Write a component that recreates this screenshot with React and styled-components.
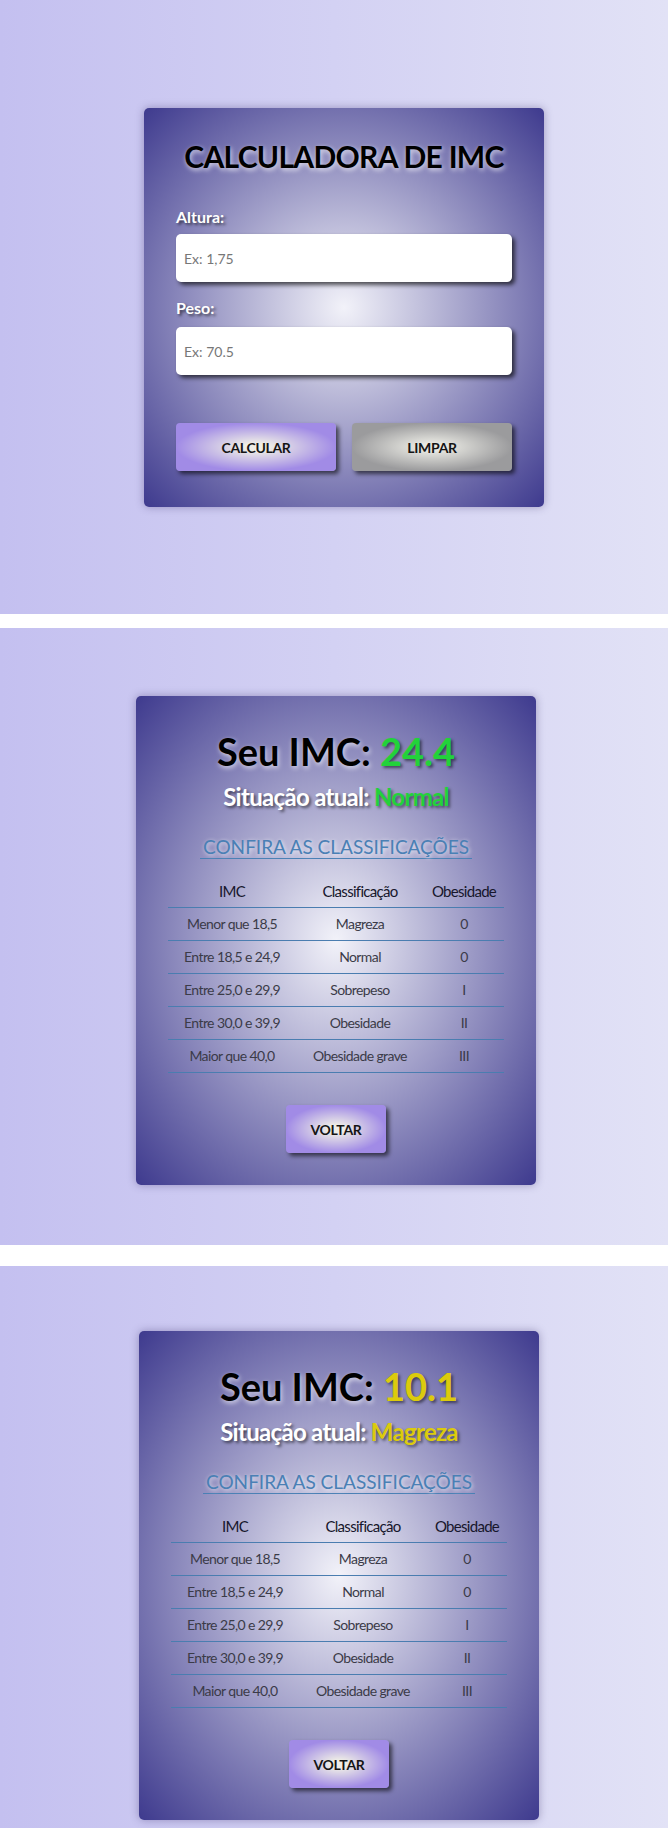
import React from "react";
import styled, { createGlobalStyle } from "styled-components";

const GlobalStyle = createGlobalStyle`
  html, body { margin: 0; padding: 0; background: #ffffff; }
  body { font-family: Lato, "Noto Sans", "Liberation Sans", sans-serif; }
  *, *::before, *::after { box-sizing: border-box; }
`;

const Screen = styled.section`
  height: ${(p) => p.$height}px;
  margin-top: ${(p) => p.$gap || 0}px;
  padding-top: ${(p) => p.$top}px;
  padding-left: ${(p) => p.$shift}px;
  display: flex;
  justify-content: center;
  align-items: flex-start;
  overflow: hidden;
  background: linear-gradient(to right, #c4c0f0, #e2e2f6);
`;

const Card = styled.div`
  width: 400px;
  padding: ${(p) => p.$pad};
  border-radius: 5px;
  background: radial-gradient(ellipse at center, #f2f2f9 0%, #3e3a8e 100%);
  box-shadow: 0 0 8px rgba(40, 30, 90, 0.35);
  display: flex;
  flex-direction: column;
`;

const AppTitle = styled.h1`
  margin: 0;
  font-size: 30px;
  font-weight: 700;
  line-height: 36px;
  letter-spacing: -0.7px;
  text-align: center;
  color: #000;
  text-shadow: 1px 2px 5px rgba(255, 255, 255, 0.75);
`;

const FieldLabel = styled.label`
  display: block;
  margin-top: ${(p) => p.$space}px;
  font-size: 16px;
  line-height: 19px;
  font-weight: 700;
  color: #fff;
  text-shadow: 2px 2px 3px rgba(0, 0, 0, 0.6);
`;

const TextInput = styled.input`
  display: block;
  width: 100%;
  height: 48px;
  margin-top: ${(p) => p.$space}px;
  padding: 0 8px;
  border: none;
  outline: none;
  border-radius: 5px;
  background: #fff;
  font-family: inherit;
  font-size: 14px;
  color: #222;
  box-shadow: 3px 3px 4px rgba(0, 0, 0, 0.65);
  &::placeholder {
    color: #777;
  }
`;

const ButtonRow = styled.div`
  display: grid;
  grid-template-columns: 1fr 1fr;
  gap: 16px;
  margin-top: 48px;
`;

const gradients = {
  primary: "radial-gradient(ellipse closest-side, #efeee6 15%, #a18be6 100%)",
  neutral: "radial-gradient(ellipse closest-side, #e9e9e3 15%, #9b9b9d 100%)",
};

const ActionButton = styled.button`
  height: 48px;
  width: ${(p) => (p.$width ? `${p.$width}px` : "100%")};
  align-self: ${(p) => (p.$width ? "center" : "stretch")};
  margin-top: ${(p) => p.$space || 0}px;
  border: none;
  border-radius: 4px;
  background: ${(p) => gradients[p.$variant]};
  font-family: inherit;
  font-size: 14px;
  font-weight: 700;
  letter-spacing: -0.3px;
  color: #151515;
  text-transform: uppercase;
  box-shadow: 3px 3px 4px rgba(0, 0, 0, 0.6);
  cursor: pointer;
`;

const ResultTitle = styled.h1`
  margin: 0;
  font-size: 38px;
  font-weight: 700;
  line-height: 46px;
  text-align: center;
  color: #000;
  text-shadow: 1px 2px 5px rgba(255, 255, 255, 0.7);
`;

const Highlight = styled.span`
  color: ${(p) => p.$color};
  text-shadow: 2px 2px 3px rgba(0, 0, 0, 0.5);
`;

const Status = styled.h2`
  margin: 8px 0 0;
  font-size: 24px;
  font-weight: 700;
  line-height: 29px;
  letter-spacing: -0.7px;
  text-align: center;
  color: #fff;
  text-shadow: 2px 2px 3px rgba(0, 0, 0, 0.55);
`;

const SectionHeading = styled.p`
  margin: 25px 0 0;
  text-align: center;
  line-height: 22px;
`;

const HeadingLink = styled.span`
  display: inline-block;
  padding: 0 3px;
  font-size: 19px;
  font-weight: 400;
  color: #4a80b5;
  border-bottom: 1px solid #4a80b5;
  text-shadow: 1px 1px 4px rgba(255, 255, 255, 0.8);
`;

const Table = styled.table`
  width: 100%;
  margin-top: 15px;
  border-collapse: collapse;
  table-layout: fixed;
`;

const HeadCell = styled.th`
  width: ${(p) => p.$w}px;
  padding: 8px 0 7px;
  font-size: 15px;
  font-weight: 400;
  line-height: 18px;
  letter-spacing: -0.7px;
  color: #17172c;
  text-align: center;
  border-bottom: 1px solid #4a7db0;
`;

const Cell = styled.td`
  padding: 8px 0;
  font-size: 14px;
  line-height: 16px;
  letter-spacing: -0.6px;
  color: #3b3b48;
  text-align: center;
  border-bottom: 1px solid #4a7db0;
`;

const rows = [
  ["Menor que 18,5", "Magreza", "0"],
  ["Entre 18,5 e 24,9", "Normal", "0"],
  ["Entre 25,0 e 29,9", "Sobrepeso", "I"],
  ["Entre 30,0 e 39,9", "Obesidade", "II"],
  ["Maior que 40,0", "Obesidade grave", "III"],
];

function Calculator() {
  return (
    <Card $pad="30px 32px 36px">
      <AppTitle>CALCULADORA DE IMC</AppTitle>
      <FieldLabel $space={33} htmlFor="altura">Altura:</FieldLabel>
      <TextInput $space={8} id="altura" placeholder="Ex: 1,75" />
      <FieldLabel $space={16} htmlFor="peso">Peso:</FieldLabel>
      <TextInput $space={10} id="peso" placeholder="Ex: 70.5" />
      <ButtonRow>
        <ActionButton $variant="primary">Calcular</ActionButton>
        <ActionButton $variant="neutral">Limpar</ActionButton>
      </ButtonRow>
    </Card>
  );
}

function Result({ imc, status, color }) {
  return (
    <Card $pad="32px 32px 32px">
      <ResultTitle>
        Seu IMC: <Highlight $color={color}>{imc}</Highlight>
      </ResultTitle>
      <Status>
        Situação atual: <Highlight $color={color}>{status}</Highlight>
      </Status>
      <SectionHeading>
        <HeadingLink>CONFIRA AS CLASSIFICAÇÕES</HeadingLink>
      </SectionHeading>
      <Table>
        <thead>
          <tr>
            <HeadCell $w={128}>IMC</HeadCell>
            <HeadCell $w={128}>Classificação</HeadCell>
            <HeadCell $w={80}>Obesidade</HeadCell>
          </tr>
        </thead>
        <tbody>
          {rows.map((r) => (
            <tr key={r[0]}>
              <Cell>{r[0]}</Cell>
              <Cell>{r[1]}</Cell>
              <Cell>{r[2]}</Cell>
            </tr>
          ))}
        </tbody>
      </Table>
      <ActionButton $variant="primary" $width={100} $space={32}>
        Voltar
      </ActionButton>
    </Card>
  );
}

export default function App() {
  return (
    <>
      <GlobalStyle />
      <Screen $height={614} $top={108} $shift={20}>
        <Calculator />
      </Screen>
      <Screen $gap={14} $height={617} $top={68} $shift={4}>
        <Result imc="24.4" status="Normal" color="#22d23a" />
      </Screen>
      <Screen $gap={21} $height={617} $top={65} $shift={10}>
        <Result imc="10.1" status="Magreza" color="#dccb0c" />
      </Screen>
    </>
  );
}
